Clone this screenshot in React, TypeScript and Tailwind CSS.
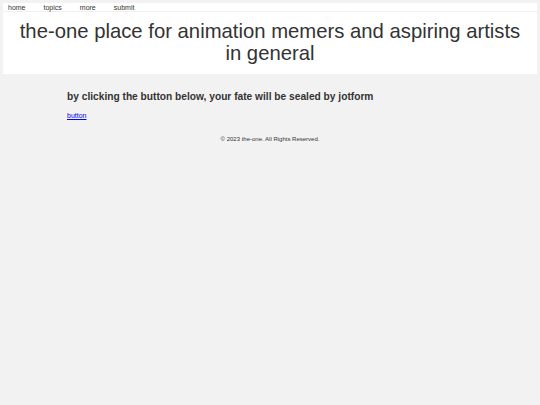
export default function App() {
  const links = ["home", "topics", "more", "submit"];

  return (
    <div className="min-h-[405px] bg-[#f2f2f2] pt-[3px] font-['Liberation_Sans',Arial,sans-serif] text-[#333]">
      <header className="mx-[3px] bg-white">
        <nav className="flex h-[9px] items-center gap-[18px] border-b border-[#f0f0f0] pl-[5px] text-[7px] leading-none">
          {links.map((l) => (
            <a key={l} className="text-[#333]">
              {l}
            </a>
          ))}
        </nav>
        <h1 className="px-[14px] pt-[8px] pb-[10px] text-center text-[20.3px] leading-[22px]">
          the-one place for animation memers and aspiring artists in general
        </h1>
      </header>
      <main className="px-[67px] pt-[18px]">
        <h2 className="text-[10.2px] font-bold leading-none">
          by clicking the button below, your fate will be sealed by jotform
        </h2>
        <a href="#" className="mt-[10px] block w-fit text-[7px] leading-none text-[#0000ee] underline">
          button
        </a>
      </main>
      <footer className="pt-[17px] text-center text-[6px] leading-none">
        © 2023 the-one. All Rights Reserved.
      </footer>
    </div>
  );
}
